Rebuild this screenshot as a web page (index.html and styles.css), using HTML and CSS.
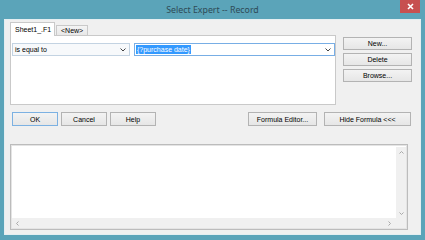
FILE: index.html
```html
<!DOCTYPE html>
<html lang="en">
<head>
    <meta charset="UTF-8">
    <title>Select Expert -- Record</title>
    <link rel="stylesheet" href="styles.css">
</head>
<body>
    <div class="window">
        <div class="titlebar">
            <span></span>
            <span class="title">Select Expert -- Record</span>
            <span class="close">
                <svg width="7" height="7" viewBox="0 0 7 7"><path d="M1 1L6 6M6 1L1 6" stroke="#fff" stroke-width="1.6"/></svg>
            </span>
        </div>

        <div class="client">
            <div class="top">
                <div class="tabs-area">
                    <div class="tabstrip">
                        <div class="tab active">Sheet1_.F1</div>
                        <div class="tab">&lt;New&gt;</div>
                    </div>
                    <div class="panel">
                        <div class="combo combo-op">
                            <span class="combo-text">is equal to</span>
                            <svg class="chev" width="6" height="4" viewBox="0 0 6 4"><path d="M0.5 0.5L3 3L5.5 0.5" fill="none" stroke="#444" stroke-width="1"/></svg>
                        </div>
                        <div class="combo combo-val">
                            <span class="combo-text"><span class="sel">{?purchase date}</span></span>
                            <svg class="chev" width="6" height="4" viewBox="0 0 6 4"><path d="M0.5 0.5L3 3L5.5 0.5" fill="none" stroke="#444" stroke-width="1"/></svg>
                        </div>
                    </div>
                </div>
                <div class="side-buttons">
                    <button class="btn">New...</button>
                    <button class="btn">Delete</button>
                    <button class="btn">Browse...</button>
                </div>
            </div>

            <div class="actions">
                <div class="group">
                    <button class="btn btn-small default">OK</button>
                    <button class="btn btn-small">Cancel</button>
                    <button class="btn btn-small">Help</button>
                </div>
                <div class="group group-right">
                    <button class="btn btn-fe">Formula Editor...</button>
                    <button class="btn btn-hide">Hide Formula &lt;&lt;&lt;</button>
                </div>
            </div>

            <div class="formula">
                <div class="formula-text"></div>
                <div class="vscroll">
                    <svg width="5" height="3" viewBox="0 0 5 3"><path d="M0.5 2.5L2.5 0.5L4.5 2.5" fill="none" stroke="#a9a9a9" stroke-width="1"/></svg>
                    <svg width="5" height="3" viewBox="0 0 5 3"><path d="M0.5 0.5L2.5 2.5L4.5 0.5" fill="none" stroke="#a9a9a9" stroke-width="1"/></svg>
                </div>
                <div class="hscroll">
                    <svg width="3" height="5" viewBox="0 0 3 5"><path d="M2.5 0.5L0.5 2.5L2.5 4.5" fill="none" stroke="#a9a9a9" stroke-width="1"/></svg>
                    <svg width="3" height="5" viewBox="0 0 3 5"><path d="M0.5 0.5L2.5 2.5L0.5 4.5" fill="none" stroke="#a9a9a9" stroke-width="1"/></svg>
                </div>
                <div class="corner"></div>
            </div>
        </div>
    </div>
</body>
</html>
```

FILE: styles.css
```css
/* Window frame */
body {
    margin: 0;
    padding: 0;
    font-family: 'Liberation Sans', Arial, sans-serif;
    background-color: #5ba4b9;
}

.window {
    width: 425px;
    height: 240px;
    background-color: #5ba4b9;
    display: flex;
    flex-direction: column;
}

.titlebar {
    height: 19px;
    display: grid;
    grid-template-columns: 1fr auto 1fr;
    align-items: start;
}

.title {
    font-family: 'Noto Sans', 'Open Sans', sans-serif;
    font-size: 8.8px;
    font-weight: 400;
    line-height: 19px;
    color: #2e4a56;
    padding-top: 1px;
}

.close {
    justify-self: end;
    width: 20px;
    height: 13px;
    margin-right: 5px;
    background-color: #c75050;
    display: flex;
    align-items: center;
    justify-content: center;
}

.close svg {
    display: block;
}

/* Client area */
.client {
    flex: 1;
    margin: 0 4px 5px 4px;
    border: 1px solid #e4eef1;
    background-color: #f0f0f0;
    display: flex;
    flex-direction: column;
    font-size: 7px;
    color: #000;
}

.top {
    display: flex;
    margin-top: 2px;
}

.tabs-area {
    margin-left: 5px;
    width: 326px;
}

.tabstrip {
    display: flex;
    align-items: flex-end;
    height: 13px;
}

.tab {
    height: 9px;
    line-height: 9px;
    padding: 0 4px;
    border: 1px solid #c9c9c9;
    border-bottom: none;
    background: linear-gradient(#f4f4f4, #e8e8e8);
    margin-left: 1px;
}

.tab.active {
    height: 13px;
    line-height: 13px;
    background: #fff;
    margin-left: 0;
    margin-bottom: -1px;
    width: 35px;
    position: relative;
    z-index: 1;
}

.panel {
    height: 61px;
    border: 1px solid #c9c9c9;
    background-color: #fff;
    display: flex;
    align-items: flex-start;
    padding: 7px 0 0 1px;
}

.combo {
    height: 11px;
    border: 1px solid #bfcbd9;
    background-color: #fff;
    display: flex;
    align-items: center;
    justify-content: space-between;
    padding: 0 3px 0 2px;
}

.combo-op {
    width: 111px;
    background-color: #f7f9fb;
    border-color: #c3d3e2;
}

.combo-val {
    width: 195px;
    margin-left: 4px;
    border-color: #78aee5;
    padding-left: 1px;
}

.combo-text {
    line-height: 11px;
}

.sel {
    background-color: #3399ff;
    color: #fff;
    padding: 1px 1px;
}

.chev {
    display: block;
}

/* Buttons */
.side-buttons {
    margin-left: 7px;
    padding-top: 15px;
    display: flex;
    flex-direction: column;
    gap: 3px;
}

.btn {
    font-family: 'Liberation Sans', Arial, sans-serif;
    font-size: 7px;
    color: #000;
    height: 13px;
    width: 69px;
    padding: 0;
    border: 1px solid #b3b3b3;
    border-radius: 0;
    background: linear-gradient(#f3f3f3, #e6e6e6);
    line-height: 11px;
}

.actions {
    display: flex;
    justify-content: space-between;
    margin-top: 7px;
    padding: 0 9px 0 7px;
}

.group {
    display: flex;
    gap: 3px;
}

.group-right {
    gap: 7px;
}

.btn-small {
    width: 46px;
    height: 14px;
}

.btn-fe {
    width: 69px;
    height: 14px;
}

.btn-hide {
    width: 87px;
    height: 14px;
}

.default {
    border-color: #7cb1e2;
}

/* Formula box */
.formula {
    margin: 18px 0 0 5px;
    width: 394px;
    height: 81px;
    border: 1px solid #bcbcbc;
    box-shadow: inset 0 0 0 1px #e4e4e4;
    padding: 2px 1px 1px 1px;
    background-color: #fff;
    display: grid;
    grid-template-columns: 1fr 10px;
    grid-template-rows: 1fr 10px;
}

.formula-text {
    background-color: #fff;
}

.vscroll {
    background-color: #f0f0f0;
    display: flex;
    flex-direction: column;
    align-items: center;
    justify-content: space-between;
    padding: 4px 0 3px;
}

.hscroll {
    background-color: #f0f0f0;
    display: flex;
    align-items: center;
    justify-content: space-between;
    padding: 0 5px 0 4px;
}

.corner {
    background-color: #f0f0f0;
}

.vscroll svg,
.hscroll svg {
    display: block;
}
```
